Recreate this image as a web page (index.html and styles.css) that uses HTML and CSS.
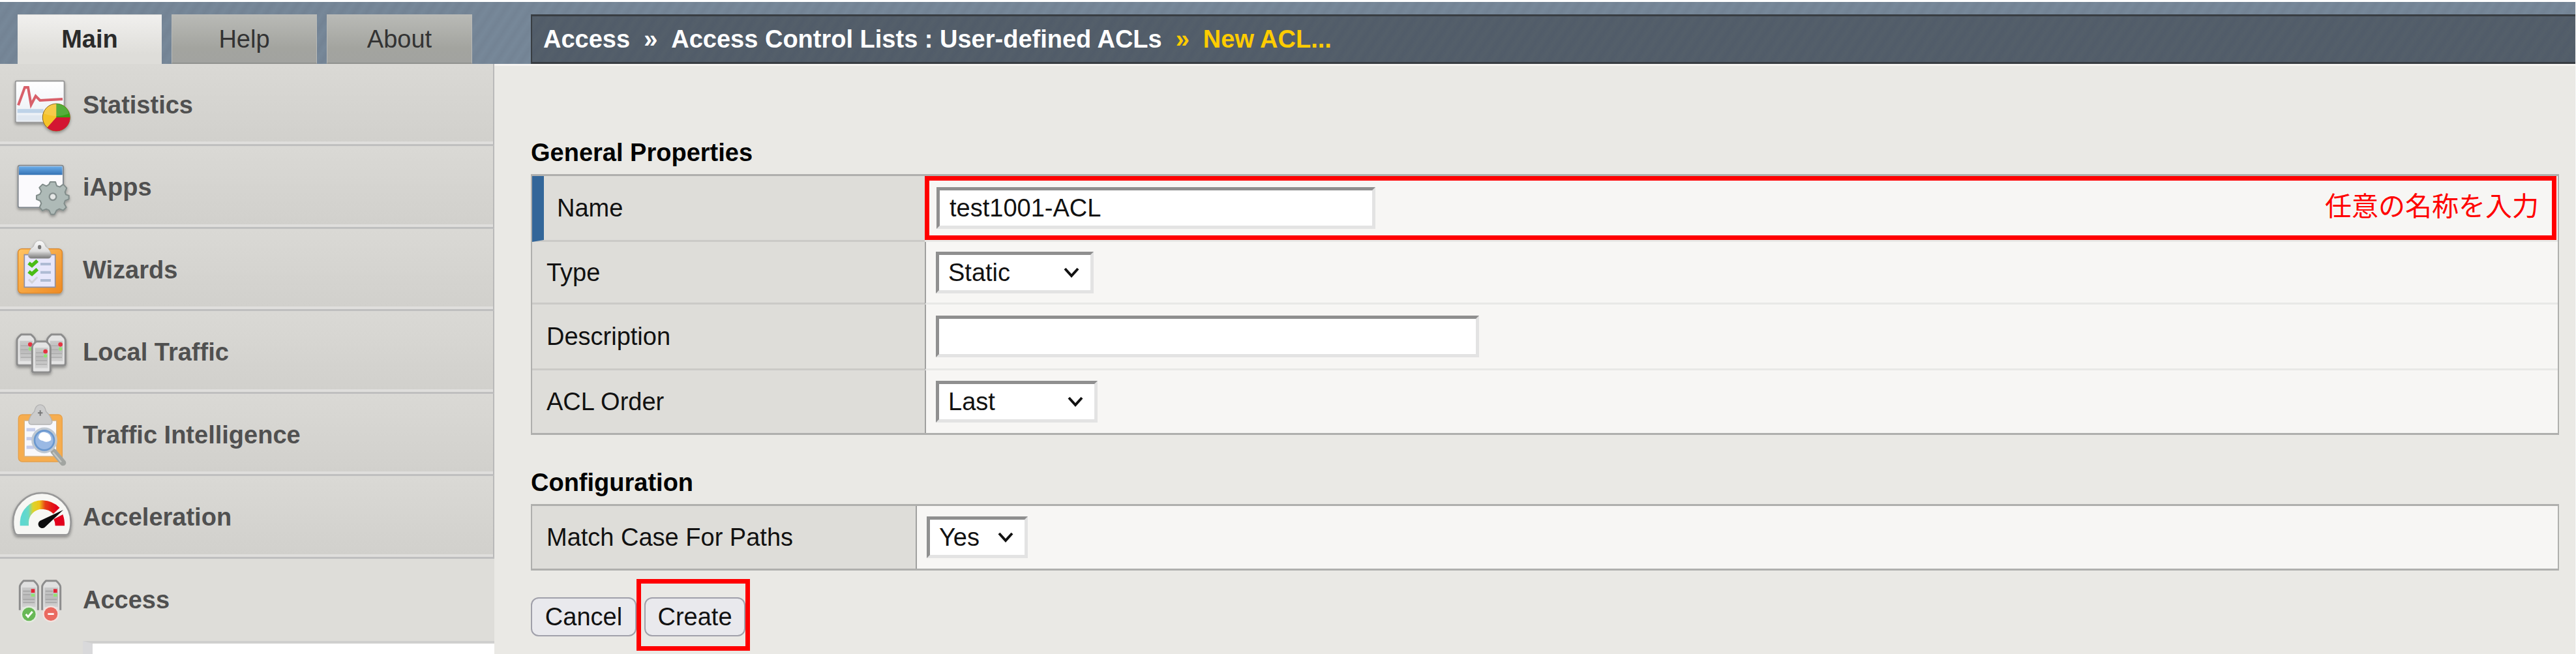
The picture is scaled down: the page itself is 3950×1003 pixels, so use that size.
FILE: index.html
```html
<!DOCTYPE html>
<html lang="ja">
<head>
<meta charset="utf-8">
<title>New ACL</title>
<link rel="stylesheet" href="styles.css">
</head>
<body>
<header class="topbar">
  <nav class="tabs">
    <a class="tab tab-active" href="#main">Main</a>
    <a class="tab" href="#help">Help</a>
    <a class="tab" href="#about">About</a>
  </nav>
  <nav class="breadcrumb">
    <a href="#access">Access</a><span>»</span><a href="#acls">Access Control Lists : User-defined ACLs</a><span class="current">»</span><span class="current">New ACL...</span>
  </nav>
</header>
<div class="page">
  <aside class="sidebar">
    <ul class="menu">
      <li><a href="#statistics">
        <svg class="icon" viewBox="0 -36 381 378" aria-hidden="true">
          <defs>
            <linearGradient id="paper" x2="0" y2="1"><stop stop-color="#fff"/><stop offset="1" stop-color="#e9eef4"/></linearGradient>
            <linearGradient id="blue" x2="0" y2="1"><stop stop-color="#69ace8"/><stop offset="1" stop-color="#3672b4"/></linearGradient>
            <linearGradient id="orange" x2="1" y2="1"><stop stop-color="#ffc462"/><stop offset="1" stop-color="#ee8a24"/></linearGradient>
            <linearGradient id="steel" x2="0" y2="1"><stop stop-color="#fafafa"/><stop offset=".6" stop-color="#ddd"/><stop offset="1" stop-color="#777"/></linearGradient>
            <linearGradient id="server" x2="0" y2="1"><stop stop-color="#c9c9c9"/><stop offset=".5" stop-color="#bbb"/><stop offset="1" stop-color="#d2d2d2"/></linearGradient>
            <linearGradient id="scale" x2="1" y2="0"><stop stop-color="#5fd8d0"/><stop offset=".13" stop-color="#6bd8c4"/><stop offset=".27" stop-color="#dcd42c"/><stop offset=".47" stop-color="#efc318"/><stop offset=".65" stop-color="#e63d12"/><stop offset="1" stop-color="#e2001c"/></linearGradient>
            <filter id="shade" x="-20%" y="-20%" width="140%" height="150%"><feDropShadow dx="0" dy="7" stdDeviation="6" flood-opacity=".35"/></filter>
          </defs>
          <g filter="url(#shade)">
            <rect x="71" y="43" width="225" height="190" rx="6" fill="url(#paper)" stroke="#999" stroke-width="6"/>
            <path d="M80 172h120v18H80z" fill="#bed3e8"/><path d="M80 200h120v24H80z" fill="#dfe7f0"/>
            <path d="M84 154L114 72h15l14 80 21-40 20 20 104-6" fill="none" stroke="#d8606a" stroke-width="12"/>
            <circle cx="259" cy="210" r="63" fill="#f5c22b" stroke="#8a6520" stroke-width="3"/>
            <path d="M259 210v-63a63 63 0 0 1 63 63z" fill="#37a018"/>
            <path d="M259 210h63a63 63 0 0 1-105 47z" fill="#d31733"/>
            <path d="M201 193a60 60 0 0 1 116 0q-54 22-116 0z" fill="#fff" opacity=".15"/>
          </g>
        </svg>Statistics</a></li>
      <li><a href="#iapps">
        <svg class="icon" viewBox="0 342 381 378" aria-hidden="true">
          <g filter="url(#shade)">
            <rect x="83" y="431" width="208" height="194" rx="8" fill="#fbfafd" stroke="#858b91" stroke-width="6"/>
            <path d="M87 436h200v39H87z" fill="url(#blue)"/>
            <path d="M231 507h24l6 18 14 5 16-12 16 17-8 19 4 11 14 5v16l-17 7-5 13 10 18-14 14-18-7-13 7-9 18h-17l-8-18-13-6-18 7-13-15 8-18-5-12-17-7v-17l16-7 6-13-9-17 15-15 17 8 12-7z" fill="#aebab7" stroke="#818c8a" stroke-width="6" stroke-linejoin="round"/>
            <circle cx="243" cy="575" r="16" fill="#e5e7e6" stroke="#858f8e" stroke-width="7"/>
          </g>
        </svg>iApps</a></li>
      <li><a href="#wizards">
        <svg class="icon" viewBox="0 3 381 378" aria-hidden="true">
          <g filter="url(#shade)">
            <rect x="83" y="95" width="203" height="204" rx="17" fill="url(#orange)" stroke="#d98529" stroke-width="4"/>
            <path d="M112 122h142v149H112z" fill="#e7e7fb" stroke="#8c8fa8" stroke-width="5"/>
            <path d="M130 126q2-28 24-42 8-27 28-27t28 27q22 14 26 42-3 13-14 13h-78q-12 0-14-13z" fill="url(#steel)" stroke="#aaa" stroke-width="2"/>
            <ellipse cx="182" cy="87" rx="8" ry="10" fill="#777"/>
            <path d="M186 165h48M186 203h48M186 240h48" stroke="#aebbd4" stroke-width="12"/>
            <path d="M132 160l15 12 25-23M132 199l15 12 25-23" fill="none" stroke="#4cbd18" stroke-width="16"/>
            <path d="M132 236l15 14 25-25" fill="none" stroke="#d2d3da" stroke-width="9"/>
          </g>
        </svg>Wizards</a></li>
      <li><a href="#local-traffic">
        <svg class="icon" viewBox="0 381 381 378" aria-hidden="true">
          <g filter="url(#shade)">
            <g id="unit">
              <path d="M78 516q0-12 20-27h44q20 15 20 28v105q0 9-10 9H88q-10 0-10-9z" fill="#e4e4e4" stroke="#8d8d8d" stroke-width="9"/>
              <path d="M91 518h59v94H91z" fill="url(#server)"/><path d="M95 541h35M95 559h35M95 577h51M95 594h51" stroke="#aaa" stroke-width="4"/>
              <circle cx="139" cy="535" r="10" fill="#e43543"/><circle cx="139" cy="555" r="8" fill="#91e276"/>
            </g>
            <use href="#unit" x="139"/>
            <use href="#unit" x="70" y="32"/>
          </g>
        </svg>Local Traffic</a></li>
      <li><a href="#traffic-intelligence">
        <svg class="icon" viewBox="0 12 381 378" aria-hidden="true">
          <rect x="85" y="108" width="201" height="216" rx="17" fill="#f6ad4f" stroke="#e6a04a" stroke-width="4"/>
          <path d="M112 135h148v165H112z" fill="#f8f8fb" stroke="#d6b281" stroke-width="4"/>
          <path d="M122 177h40M122 218h30M122 258h35" stroke="#c5cdec" stroke-width="15"/>
          <path d="M132 142q3-27 26-48 6-32 27-32t27 32q23 21 28 48-3 11-13 11h-82q-11 0-13-11z" fill="#ccc" stroke="#b3b3b3" stroke-width="4"/>
          <path d="M174 100h22M185 88v25" stroke="#777" stroke-width="6"/>
          <path d="M246 277l44 52" stroke="#a2a5a1" stroke-width="28" stroke-linecap="round"/>
          <path d="M244 281l38 45" stroke="#c5c7c2" stroke-width="7"/>
          <circle cx="204" cy="226" r="53" fill="#86aadd" stroke="#bfc8d2" stroke-width="13"/>
          <circle cx="204" cy="226" r="45" fill="#9ab9e4" stroke="#6b98cf" stroke-width="8"/>
          <path d="M176 212q6-27 31-23 30 6 28 36-20 15-38 3-15-2-21-16z" fill="#fff"/>
        </svg>Traffic Intelligence</a></li>
      <li><a href="#acceleration">
        <svg class="icon" viewBox="0 393 381 378" aria-hidden="true">
          <g filter="url(#shade)">
            <path d="M60 604a133 133 0 0 1 266 0q0 34-10 54-4 6-12 6H82q-8 0-12-6-10-20-10-54z" fill="#f7f7f4" stroke="#989898" stroke-width="8"/>
            <path d="M112 622v-18a83 83 0 0 1 83-79q40 2 65 28" fill="none" stroke="url(#scale)" stroke-width="40"/>
            <path d="M254 622q0-17-7-30l42-22q9 24 8 52z" fill="#e2001c"/>
            <path d="M291 549L184 599a17 17 0 1 0 21 31z" fill="#080808"/>
          </g>
        </svg>Acceleration</a></li>
      <li class="open"><a href="#access-menu">
        <svg class="icon" viewBox="0 771 381 378" aria-hidden="true">
          <g id="tower">
            <path d="M91 1007V900q0-11 18-28h46q20 17 20 29v106" fill="#e0e0e0" stroke="#8d8d8d" stroke-width="9"/>
            <path d="M102 903h62v90h-62z" fill="url(#server)"/><path d="M106 920h34M106 936h34M106 958h53M106 972h53" stroke="#a5a5a5" stroke-width="5"/>
            <path d="M143 910h17v17h-17z" fill="#e32435"/><path d="M143 932h17v13h-17z" fill="#91e276"/>
          </g>
          <use href="#tower" x="103"/>
          <circle cx="133" cy="1026" r="38" fill="#e3ebdf"/><circle cx="133" cy="1026" r="31" fill="#68b856"/>
          <path d="M119 1026l10 12 20-24" fill="none" stroke="#fff" stroke-width="9"/>
          <circle cx="234" cy="1025" r="38" fill="#f1e2df"/><circle cx="234" cy="1025" r="31" fill="#ea6a60"/>
          <path d="M220 1025h28" stroke="#fff" stroke-width="8"/>
        </svg>Access</a></li>
    </ul>
    <div class="submenu"></div>
  </aside>
  <main class="content">
    <form>
      <h2>General Properties</h2>
      <table class="props">
        <tr class="tall required">
          <th scope="row"><label for="name">Name</label></th>
          <td><div class="callout">
            <input class="field name" id="name" type="text" value="test1001-ACL">
            <span class="note">任意の名称を入力</span>
          </div></td>
        </tr>
        <tr>
          <th scope="row"><label for="type">Type</label></th>
          <td><span class="picker type"><select id="type"><option>Static</option></select>
            <svg viewBox="0 0 24 16" aria-hidden="true"><path d="M2 2l10 11L22 2"/></svg></span></td>
        </tr>
        <tr class="tall">
          <th scope="row"><label for="desc">Description</label></th>
          <td><input class="field desc" id="desc" type="text"></td>
        </tr>
        <tr>
          <th scope="row"><label for="order">ACL Order</label></th>
          <td><span class="picker order"><select id="order"><option>Last</option></select>
            <svg viewBox="0 0 24 16" aria-hidden="true"><path d="M2 2l10 11L22 2"/></svg></span></td>
        </tr>
      </table>
      <h2 class="next">Configuration</h2>
      <table class="props config">
        <tr>
          <th scope="row"><label for="case">Match Case For Paths</label></th>
          <td><span class="picker case"><select id="case"><option>Yes</option></select>
            <svg viewBox="0 0 24 16" aria-hidden="true"><path d="M2 2l10 11L22 2"/></svg></span></td>
        </tr>
      </table>
      <div class="actions">
        <button class="cancel" type="button">Cancel</button>
        <div class="callout-create"><button type="button">Create</button></div>
      </div>
    </form>
  </main>
</div>
</body>
</html>
```
FILE: styles.css
```css
* { box-sizing: border-box; }
body {
  margin: 0;
  min-height: 100vh;
  display: flex;
  flex-direction: column;
  border-top: 3px solid #fff;
  border-right: 1px solid #f8f8f8;
  background: #eae9e5;
  color: #111;
  font: 38px/44px "Liberation Sans", Arial, "Noto Sans CJK JP", sans-serif;
}
a { color: inherit; text-decoration: none; }

.topbar {
  display: flex;
  height: 95px;
  padding-top: 19px;
  background: repeating-linear-gradient(123deg, #738394 0, #778899 8px, #738394 16px);
}
.tabs {
  display: flex;
  gap: 15px;
  flex: 0 0 814px;
  padding-left: 27px;
}
.tab {
  width: 223px;
  line-height: 75px;
  text-align: center;
  color: #333;
  border: 1px solid #b9bab7;
  border-bottom: 2px solid #90918e;
  background: linear-gradient(#b9bab6, #a3a49f 70%, #a2a3a0);
}
.tab-active {
  width: 221px;
  color: #2a2a2a;
  font-weight: bold;
  border: 0;
  border-top: 1px solid #d8d8d5;
  background: linear-gradient(#f1f0ee, #deddd9 80%);
}
.breadcrumb {
  display: flex;
  flex: 1;
  gap: 21px;
  padding-left: 17px;
  border: 2px solid #383d42;
  border-top-width: 3px;
  border-bottom-width: 3px;
  border-right: 0;
  background: repeating-linear-gradient(123deg, #515c69 0, #545f6a 8px, #515c69 16px);
  color: #fff;
  font-weight: bold;
  line-height: 70px;
  white-space: nowrap;
}
.breadcrumb .current { color: #fc0; }

.page { display: flex; flex: 1; }
.sidebar {
  display: flex;
  flex-direction: column;
  flex: 0 0 758px;
  background: #deddd9;
}
.menu { list-style: none; margin: 0; padding: 0; }
.menu li {
  height: 126px;
  border-right: 2px solid #b9b9b9;
  border-bottom: 3px solid #bfbfbf;
  background: linear-gradient(#dad9d5, #d1d0cc);
  box-shadow: inset 0 -4px #dfdedc;
}
.menu li:nth-child(even) { height: 127px; }
.menu a {
  display: flex;
  color: #505050;
  font-weight: bold;
  line-height: 126px;
}
.icon { flex: 0 0 127px; height: 126px; }
.menu .open { border: 0; background: none; box-shadow: none; }
.submenu {
  flex: 1;
  margin-left: 127px;
  border-top: 4px solid #cfcfce;
  border-left: 15px solid #d9d9db;
  background: #fff;
}

.content {
  flex: 1;
  padding: 114px 25px 0 56px;
  box-shadow: inset 0 3px #f6f4f1;
}
h2 { margin: 0 0 11px; font-size: 38px; color: #000; }
h2.next { margin-top: 51px; }
.props {
  width: 100%;
  table-layout: fixed;
  border-collapse: separate;
  border-spacing: 0;
  border: 3px solid #afafad;
  border-width: 3px 2px;
}
.props tr { height: 96px; }
.props .tall { height: 101px; }
.props th, .props td { padding: 0; border-bottom: 3px solid #cbcac7; }
.props th {
  width: 602px;
  padding-left: 22px;
  background: #deddd9;
  text-align: left;
  font-weight: normal;
}
.config th { width: 588px; }
.props td {
  padding-left: 15px;
  border-left: 2px solid #a0a09f;
  border-bottom-color: #e8e8e6;
  background: #f7f6f4;
}
.props tr:last-child > * { border-bottom: 0; }
.props .required th { padding-left: 20px; border-left: 18px solid #336699; }
.props .required td { padding: 0 2px 0 0; border-left: 0; }
.callout {
  display: flex;
  align-items: center;
  justify-content: space-between;
  height: 98px;
  padding: 0 20px 0 11px;
  border: 7px solid #f00;
}
.note {
  padding-bottom: 12px;
  color: #f00;
  font-family: "Noto Sans CJK JP", sans-serif;
  font-size: 41px;
}
.field, select {
  display: block;
  height: 64px;
  margin: 0;
  border: 5px solid;
  border-color: #8f8f8f #e3e3e3 #e3e3e3 #8f8f8f;
  border-radius: 0;
  background: #fff;
  color: #111;
  font: inherit;
}
.field { padding: 0 15px; }
.name { width: 673px; }
.desc { width: 833px; }
.picker { display: grid; align-items: center; }
.picker > * { grid-area: 1 / 1; }
.picker select { width: 100%; padding: 0 14px; appearance: none; }
.picker svg {
  justify-self: end;
  width: 24px;
  height: 16px;
  margin-right: 22px;
  fill: none;
  stroke: #111;
  stroke-width: 4;
  pointer-events: none;
}
.type { width: 242px; }
.order { width: 248px; }
.case { width: 155px; }

.actions { display: flex; align-items: flex-start; padding-top: 13px; }
button {
  display: block;
  width: 155px;
  height: 60px;
  padding: 0;
  border: 2px solid #a0a0aa;
  border-radius: 12px;
  background: #e9e9ed;
  color: #111;
  font: inherit;
}
.cancel { width: 162px; margin-top: 28px; }
.callout-create {
  width: 174px;
  height: 110px;
  padding: 21px 0 0 5px;
  border: 7px solid #f00;
}
```
